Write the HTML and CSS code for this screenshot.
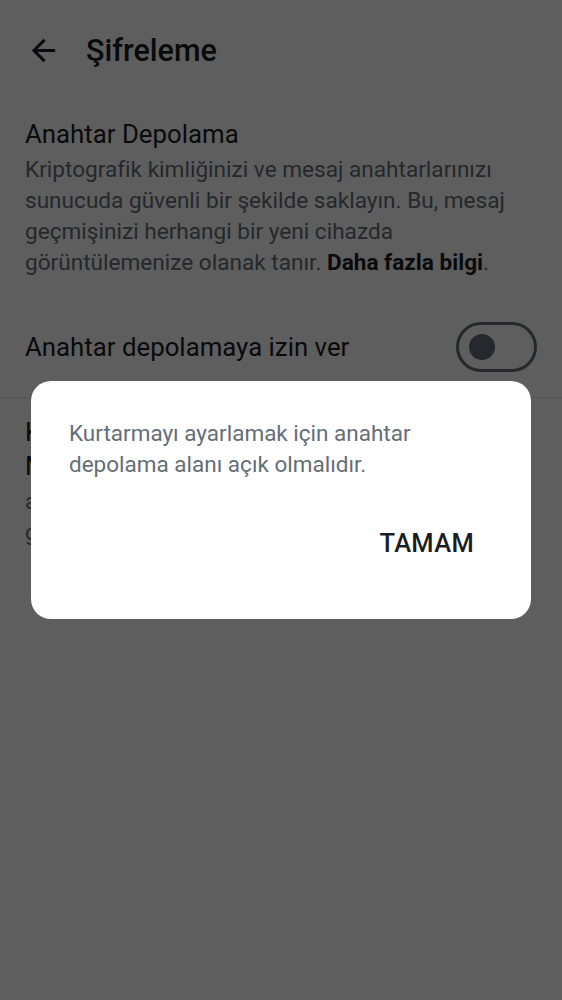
FILE: index.html
```html
<!DOCTYPE html>
<html lang="tr">
<head>
<meta charset="utf-8">
<link rel="stylesheet" href="styles.css">
</head>
<body>
<div class="screen">
  <header class="topbar">
    <button class="back" aria-label="Geri">
      <svg width="24" height="24" viewBox="0 0 24 24"><path d="M20 11H7.83l5.59-5.59L12 4l-8 8 8 8 1.41-1.41L7.83 13H20v-2z" fill="currentColor"/></svg>
    </button>
    <h1 class="title">Şifreleme</h1>
  </header>

  <section class="section">
    <h2 class="sec-title">Anahtar Depolama</h2>
    <p class="sec-body">Kriptografik kimliğinizi ve mesaj anahtarlarınızı sunucuda güvenli bir şekilde saklayın. Bu, mesaj geçmişinizi herhangi bir yeni cihazda görüntülemenize olanak tanır. <b>Daha fazla bilgi</b>.</p>
  </section>

  <div class="row">
    <span class="row-label">Anahtar depolamaya izin ver</span>
    <span class="switch"><span class="knob"></span></span>
  </div>

  <div class="divider"></div>

  <section class="section section-narrow">
    <h2 class="sec-title">Kurtarma</h2>
    <p class="sec-title">Mesaj geçmişi</p>
    <p class="sec-body">anahtarlarınızı ve mesaj<br>geçmişinizi kurtarın.</p>
  </section>
</div>

<div class="overlay">
  <div class="dialog" role="dialog">
    <p class="dialog-text">Kurtarmayı ayarlamak için anahtar depolama alanı açık olmalıdır.</p>
    <div class="actions">
      <button class="btn">TAMAM</button>
    </div>
  </div>
</div>
</body>
</html>
```

FILE: styles.css
```css
* { box-sizing: border-box; }
html, body { margin: 0; padding: 0; }
body {
  background: #ffffff;
  font-family: Roboto, "Noto Sans", "Liberation Sans", sans-serif;
  color: #1b1d22;
  width: 562px;
  height: 1000px;
  overflow: hidden;
}
.screen { display: flex; flex-direction: column; }
.topbar {
  display: flex;
  align-items: center;
  height: 100px;
  padding: 0 0 0 19px;
}
.back {
  display: flex;
  align-items: center;
  justify-content: center;
  width: 48px;
  height: 48px;
  border: 0;
  background: none;
  padding: 0;
  color: #1b1d22;
  margin-right: 19px;
}
.back svg { width: 35px; height: 35px; }
.title {
  margin: 0;
  font-size: 30.5px;
  font-weight: 500;
  color: #1b1d22;
}
.section { padding: 17px 25px 0 25px; }
.section-narrow { padding-right: 80px; }
.sec-title {
  margin: 0;
  font-size: 25.8px;
  line-height: 34px;
  font-weight: 400;
  color: #1b1d22;
}
.sec-body {
  margin: 3px 0 0;
  font-size: 22.6px;
  line-height: 31px;
  color: #656d77;
}
.sec-body b { color: #1b1d22; font-weight: 700; }
.row {
  display: flex;
  align-items: center;
  justify-content: space-between;
  padding: 0 25px;
  height: 100px;
  margin-top: 19px;
}
.row-label { font-size: 25.8px; color: #1b1d22; }
.switch {
  display: flex;
  align-items: center;
  width: 81px;
  height: 50px;
  border: 3px solid #656d77;
  border-radius: 25px;
  padding-left: 10px;
}
.knob {
  width: 26px;
  height: 26px;
  border-radius: 50%;
  background: #656d77;
}
.divider { height: 1px; background: #e1e6ec; }
.overlay {
  position: fixed;
  inset: 0;
  background: rgba(0, 0, 0, 0.63);
  display: flex;
  align-items: center;
  justify-content: center;
}
.dialog {
  width: 500px;
  height: 238px;
  background: #ffffff;
  border-radius: 20px;
  padding: 37px 49px 52px 38px;
  display: flex;
  flex-direction: column;
}
.dialog-text {
  margin: 0;
  font-size: 22.5px;
  line-height: 31px;
  color: #656d77;
  padding-right: 30px;
}
.actions {
  margin-top: auto;
  display: flex;
  justify-content: flex-end;
}
.btn {
  border: 0;
  background: none;
  font-family: inherit;
  font-size: 25.5px;
  font-weight: 500;
  color: #1b1d22;
  height: 48px;
  padding: 0 8px;
  letter-spacing: 0.3px;
}
```
